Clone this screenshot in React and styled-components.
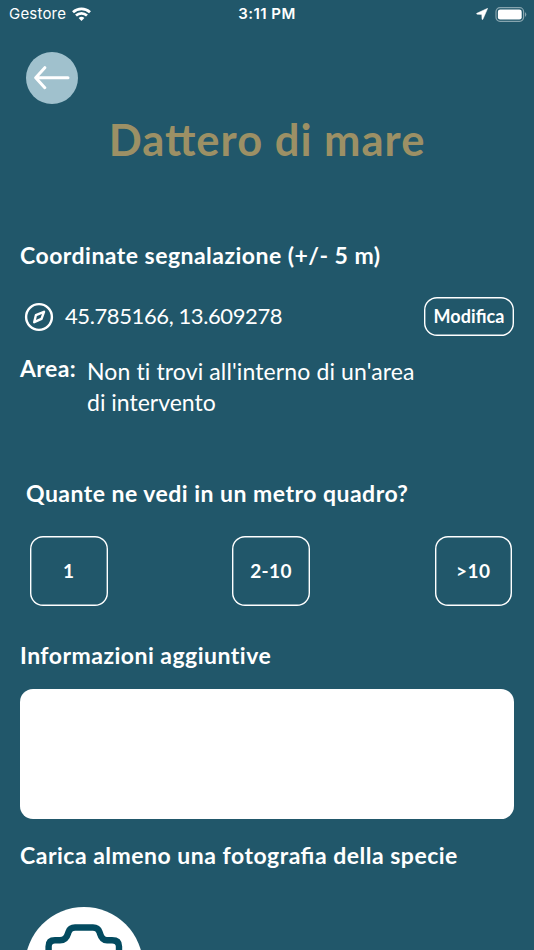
import React from 'react';
import styled, { createGlobalStyle } from 'styled-components';

const GlobalStyle = createGlobalStyle`
  * {
    box-sizing: border-box;
  }
  body {
    margin: 0;
    background: #21576a;
  }
`;

const Screen = styled.div`
  width: 534px;
  height: 950px;
  overflow: hidden;
  display: flex;
  flex-direction: column;
  background: #21576a;
  color: #fff;
  font-family: Lato, 'Noto Sans', sans-serif;

  > * {
    flex: none;
  }
`;

const StatusBar = styled.header`
  display: grid;
  grid-template-columns: 1fr auto 1fr;
  align-items: center;
  height: 28px;
  padding: 0 7px 0 9px;
  font-family: Inter, sans-serif;
  font-size: 15px;
  line-height: 28px;
`;

const Carrier = styled.div`
  display: flex;
  align-items: center;
  gap: 6px;
  letter-spacing: 0.2px;
`;

const Clock = styled.div`
  margin-left: -2px;
  font-weight: 600;
  letter-spacing: 0.45px;
`;

const StatusIcons = styled.div`
  display: flex;
  align-items: center;
  justify-content: flex-end;
  gap: 7px;
`;

const BackButton = styled.button`
  display: flex;
  align-items: center;
  justify-content: center;
  width: 52px;
  height: 52px;
  margin: 24px 0 0 26px;
  padding: 0;
  border: 0;
  border-radius: 50%;
  background: #a0c1cd;
`;

const Title = styled.h1`
  margin: 9px 0 0;
  height: 52px;
  text-align: center;
  color: #9c9065;
  font-size: 43.5px;
  font-weight: 700;
  line-height: 52px;
  letter-spacing: ${(props) => props.$spacing}px;
  font-feature-settings: 'liga' 1;
  white-space: nowrap;
`;

const Heading = styled.h2`
  margin: ${(props) => props.$top}px 0 0 ${(props) => props.$left || 20}px;
  height: 30px;
  font-size: 23px;
  font-weight: 700;
  line-height: 30px;
  letter-spacing: ${(props) => props.$spacing}px;
  font-feature-settings: 'liga' ${(props) => (props.$ligatures ? 1 : 0)};
  white-space: nowrap;
`;

const CoordinateRow = styled.div`
  display: flex;
  align-items: center;
  margin: 27px 20px 0 24px;
  height: 39px;
`;

const Coordinates = styled.span`
  flex: 1;
  padding: 0 0 1px 11px;
  font-size: 22px;
  line-height: 30px;
  letter-spacing: ${(props) => props.$spacing}px;
`;

const OutlineButton = styled.button`
  border: 0;
  border-radius: 13px;
  box-shadow: inset 0 0 0 1.4px #fff;
  background: transparent;
  color: #fff;
  font: inherit;
  font-weight: 700;
`;

const EditButton = styled(OutlineButton)`
  width: 90px;
  height: 39px;
  padding: 0 0 2px;
  font-size: 18px;
  font-feature-settings: 'liga' 1;
  letter-spacing: ${(props) => props.$spacing}px;
`;

const AreaRow = styled.div`
  display: flex;
  margin: 17px 20px 0;
  height: 68px;
`;

const AreaLabel = styled.span`
  width: 67px;
  font-size: 23px;
  font-weight: 700;
  line-height: 30px;
  letter-spacing: ${(props) => props.$spacing}px;
`;

const AreaText = styled.p`
  margin: 3px 0 0;
  font-size: 23px;
  line-height: 31px;
  font-feature-settings: 'liga' 0;
`;

const AreaLine = styled.span`
  display: block;
  letter-spacing: ${(props) => props.$spacing}px;
  white-space: nowrap;
`;

const Choices = styled.div`
  display: flex;
  justify-content: space-between;
  margin: 27.5px 22px 0 30px;
`;

const Choice = styled(OutlineButton)`
  width: 77.5px;
  height: 70px;
  padding: 0;
  font-size: 19px;
  letter-spacing: 0.4px;
`;

const Notes = styled.textarea`
  display: block;
  width: 494px;
  height: 130px;
  margin: 19px 0 0 20px;
  border: 0;
  border-radius: 13px;
  background: #fff;
  resize: none;
`;

const PhotoButton = styled.button`
  display: flex;
  justify-content: center;
  width: 118px;
  height: 118px;
  margin: 37px 0 0 25px;
  padding: 17px 0 0;
  border: 0;
  border-radius: 50%;
  background: #fff;
`;

function WifiIcon() {
  return (
    <svg width="19" height="15" viewBox="0 0 19 15" fill="none" stroke="#fff" strokeWidth="2.7">
      <path d="M1 5.2C5.8 .7 13.2 .7 18 5.2" />
      <path d="M4 8.5C7.2 5.6 11.8 5.6 15 8.5" />
      <path d="M6.6 11.1Q9.5 8.6 12.4 11.1L9.5 14Z" fill="#fff" stroke="none" />
    </svg>
  );
}

function LocationIcon() {
  return (
    <svg width="12" height="12" viewBox="0 0 12 12">
      <path d="M11.7 .3L6.9 11.3Q6.4 12 6 11.2L5.8 6.4L1 6.2Q.1 5.8 .9 5.2Z" fill="#fff" stroke="#fff" strokeWidth=".5" strokeLinejoin="round" />
    </svg>
  );
}

function BatteryIcon() {
  return (
    <svg width="32" height="15" viewBox="0 0 32 15">
      <rect x="1" y=".7" width="27.6" height="13.6" rx="4" fill="none" stroke="#87a5af" strokeWidth="1.2" />
      <rect x="2.9" y="2.5" width="23.8" height="10" rx="2.3" fill="#fff" />
      <path d="M30 5Q32.6 7.5 30 10Z" fill="#87a5af" />
    </svg>
  );
}

function ArrowIcon() {
  return (
    <svg width="36" height="26" viewBox="0 0 36 26" fill="none" stroke="#fff" strokeWidth="3" strokeLinecap="round" strokeLinejoin="round">
      <path d="M34 12.7H2M10.8 2.7L1.7 12.7L10.8 22.7" />
    </svg>
  );
}

function CompassIcon() {
  return (
    <svg width="30" height="30" viewBox="0 0 30 30" fill="none" stroke="#fff" strokeWidth="2.4" strokeLinejoin="round">
      <circle cx="15" cy="15" r="12.9" />
      <path d="M20 9.8L17.5 16.8L10.2 20.2L11.9 13.2Z" />
    </svg>
  );
}

function CameraIcon() {
  return (
    <svg width="80" height="70" viewBox="0 0 80 70" fill="none" stroke="#034b60" strokeWidth="6.4">
      <path d="M31 3.5H49Q54 3.5 55.5 8L56 9.5Q58 16.3 63 16.3H68Q75 16.3 75 22.5V60Q75 66 68 66H12Q4.6 66 4.6 60V22.5Q4.6 16.3 11 16.3H16Q22 16.3 24 9.5L24.5 8Q26 3.5 31 3.5Z" />
      <circle cx="40" cy="43" r="12" />
    </svg>
  );
}

function App() {
  return (
    <Screen>
      <GlobalStyle />
      <StatusBar>
        <Carrier>
          Gestore
          <WifiIcon />
        </Carrier>
        <Clock>3:11 PM</Clock>
        <StatusIcons>
          <LocationIcon />
          <BatteryIcon />
        </StatusIcons>
      </StatusBar>

      <BackButton aria-label="Indietro">
        <ArrowIcon />
      </BackButton>
      <Title $spacing={1}>Dattero di mare</Title>

      <Heading $top={75} $spacing={0.47}>Coordinate segnalazione (+/- 5 m)</Heading>
      <CoordinateRow>
        <CompassIcon />
        <Coordinates $spacing={-0.4}>45.785166, 13.609278</Coordinates>
        <EditButton $spacing={0.1}>Modifica</EditButton>
      </CoordinateRow>
      <AreaRow>
        <AreaLabel $spacing={0.4}>Area:</AreaLabel>
        <AreaText>
          <AreaLine $spacing={0.12}>Non ti trovi all'interno di un'area</AreaLine>
          <AreaLine $spacing={0}>di intervento</AreaLine>
        </AreaText>
      </AreaRow>

      <Heading $top={57} $left={26} $spacing={0.48}>Quante ne vedi in un metro quadro?</Heading>
      <Choices>
        <Choice>1</Choice>
        <Choice>2-10</Choice>
        <Choice>&gt;10</Choice>
      </Choices>

      <Heading $top={34.5} $spacing={0.48}>Informazioni aggiuntive</Heading>
      <Notes />

      <Heading $top={21} $spacing={0.5} $ligatures>Carica almeno una fotografia della specie</Heading>
      <PhotoButton aria-label="Carica fotografia">
        <CameraIcon />
      </PhotoButton>
    </Screen>
  );
}

export default App;
